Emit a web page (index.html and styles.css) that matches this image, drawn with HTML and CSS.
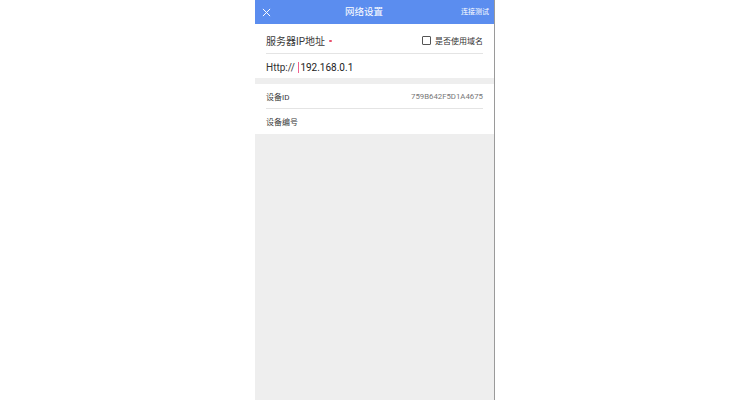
FILE: index.html
```html
<!DOCTYPE html>
<html lang="zh-CN">
<head>
<meta charset="utf-8">
<title>网络设置</title>
<link rel="stylesheet" href="styles.css">
</head>
<body>
<div class="stage">
  <div class="phone">
    <header class="bar">
      <div class="bar-left">
        <svg class="close" viewBox="0 0 10 10" width="9" height="9"><path d="M1 1L9 9M9 1L1 9" stroke="#fff" stroke-width="1.1" fill="none"/></svg>
      </div>
      <div class="bar-title">网络设置</div>
      <div class="bar-right">连接测试</div>
    </header>
    <section class="card">
      <div class="row row-ip">
        <span class="label-lg">服务器IP地址<span class="req"></span></span>
        <span class="check"><span class="box"></span>是否使用域名</span>
      </div>
      <div class="row row-input">
        <span class="prefix">Http://</span><span class="caret"></span><span class="ip">192.168.0.1</span>
      </div>
    </section>
    <section class="card card-2">
      <div class="row row-sm">
        <span class="label-sm">设备ID</span>
        <span class="value">759B642F5D1A4675</span>
      </div>
      <div class="row row-sm last">
        <span class="label-sm">设备编号</span>
      </div>
    </section>
  </div>
</div>
</body>
</html>
```
FILE: styles.css
```css
html, body {
  margin: 0;
  padding: 0;
  background: #ffffff;
  font-family: Roboto, "Noto Sans CJK SC", sans-serif;
}
.stage {
  width: 750px;
  height: 400px;
  display: flex;
  justify-content: flex-start;
  padding-left: 255px;
  box-sizing: border-box;
  overflow: hidden;
}
.phone {
  width: 240px;
  height: 400px;
  background: #eeeeee;
  border-right: 1px solid #9a9a9a;
  box-sizing: border-box;
  display: flex;
  flex-direction: column;
}
.bar {
  height: 24px;
  background: #5b8def;
  display: flex;
  align-items: center;
  color: #fff;
}
.bar-left {
  width: 24px;
  display: flex;
  align-items: center;
  padding-left: 7px;
  box-sizing: border-box;
}
.close { display: block; }
.bar-title {
  flex: 1;
  text-align: center;
  font-size: 9.5px;
  line-height: 24px;
}
.bar-right {
  width: 45px;
  font-size: 7px;
  text-align: right;
  padding-right: 5px;
  box-sizing: border-box;
  line-height: 24px;
  white-space: nowrap;
}
.card {
  background: #fff;
  padding: 0 11px;
}
.card-2 { margin-top: 6px; }
.row {
  display: flex;
  align-items: center;
  justify-content: space-between;
  border-bottom: 1px solid #e4e4e4;
  box-sizing: border-box;
}
.row-ip {
  height: 30px;
  padding-top: 4px;
}
.row-input {
  height: 24px;
  padding-top: 2px;
  border-bottom: none;
  justify-content: flex-start;
}
.label-lg {
  font-size: 10px;
  color: #3a3a3a;
  display: flex;
  align-items: center;
}
.req {
  width: 2.5px;
  height: 2.5px;
  border-radius: 50%;
  background: #e8506e;
  margin-left: 4px;
  margin-top: 1px;
}
.check {
  font-size: 8px;
  color: #333;
  display: flex;
  align-items: center;
}
.box {
  width: 7px;
  height: 7px;
  border: 1px solid #555;
  border-radius: 1px;
  margin-right: 4px;
}
.prefix {
  font-size: 10px;
  color: #333;
}
.caret {
  width: 1.5px;
  height: 11px;
  background: #f06292;
  margin-left: 3px;
  margin-right: 1px;
}
.ip {
  font-size: 10px;
  color: #222;
}
.row-sm { height: 25px; }
.row-sm.last { border-bottom: none; }
.label-sm {
  font-size: 8px;
  color: #3a3a3a;
}
.value {
  font-size: 7.8px;
  color: #777;
}
```
